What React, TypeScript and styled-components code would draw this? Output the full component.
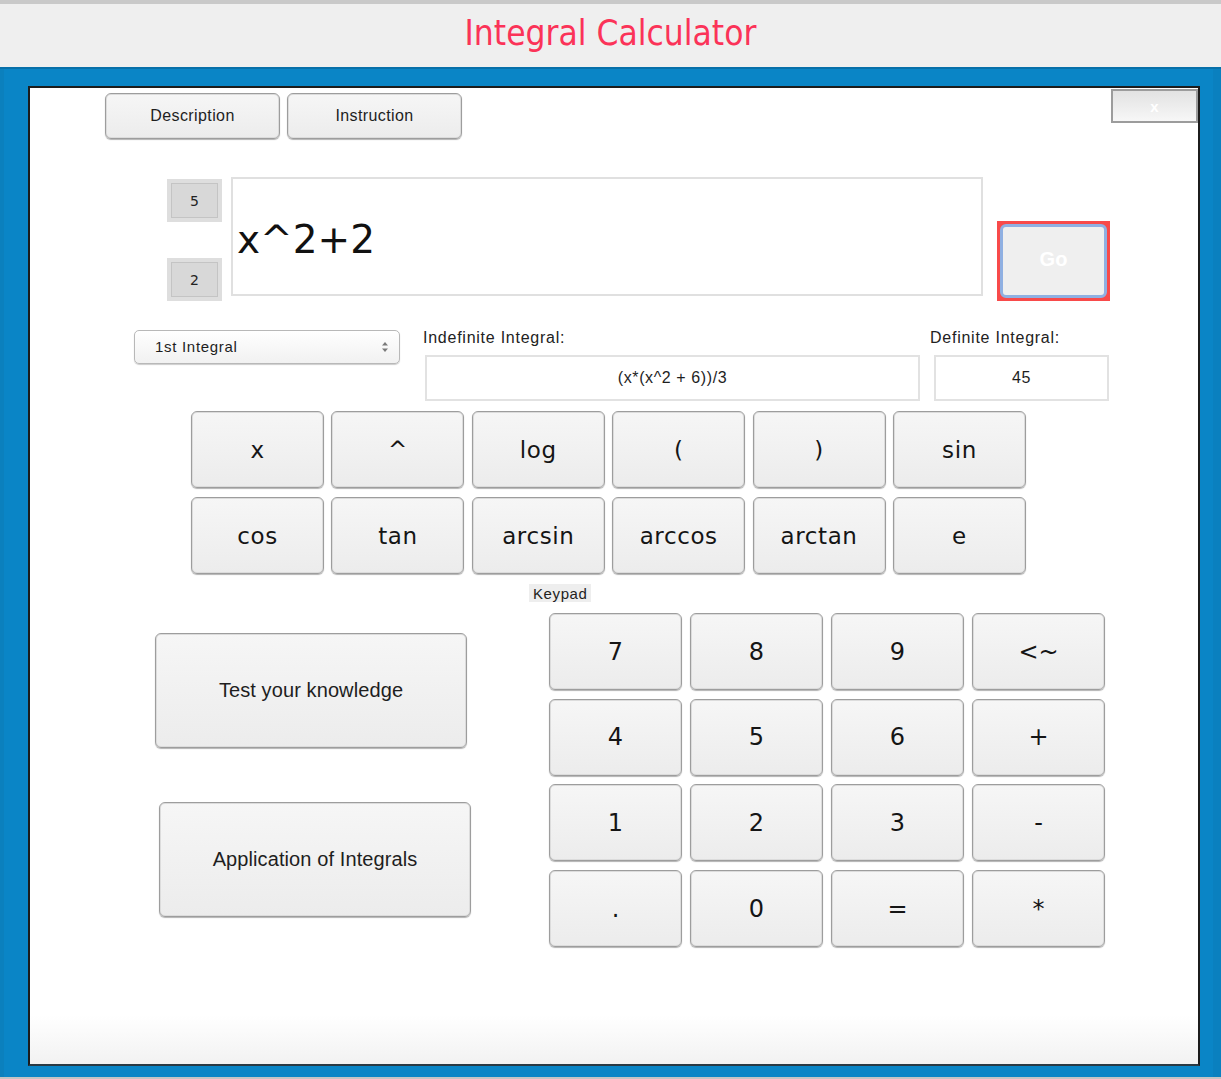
import styled, { createGlobalStyle } from "styled-components";

const GlobalStyle = createGlobalStyle`
  html, body {
    margin: 0;
    padding: 0;
    background: #c4c4c4;
  }
  body {
    font-family: "Liberation Sans", Arial, sans-serif;
    overflow: hidden;
  }
  button {
    font-family: inherit;
    cursor: pointer;
  }
`;

const FUNCTION_KEYS = ["x", "^", "log", "(", ")", "sin", "cos", "tan", "arcsin", "arccos", "arctan", "e"];
const KEYPAD_KEYS = ["7", "8", "9", "<~", "4", "5", "6", "+", "1", "2", "3", "-", ".", "0", "=", "*"];

export default function App() {
  return (
    <Page>
      <GlobalStyle />
      <TitleBar>
        <Title>Integral Calculator</Title>
      </TitleBar>

      <Frame>
        <Panel>
          <TopRow>
            <TabGroup>
              <TabButton type="button">Description</TabButton>
              <TabButton type="button">Instruction</TabButton>
            </TabGroup>
            <CloseButton type="button">x</CloseButton>
          </TopRow>

          <ExpressionRow>
            <Bounds>
              <BoundBox>
                <BoundInner>5</BoundInner>
              </BoundBox>
              <BoundBox>
                <BoundInner>2</BoundInner>
              </BoundBox>
            </Bounds>
            <ExpressionField>x^2+2</ExpressionField>
            <GoButton type="button">
              <GoFace>Go</GoFace>
            </GoButton>
          </ExpressionRow>

          <ResultRow>
            <Select>
              <span>1st Integral</span>
              <Arrows>
                <svg width="8" height="12" viewBox="0 0 8 12">
                  <path d="M4 1 L7 4.5 H1 Z" fill="#7a7a7a" />
                  <path d="M4 11 L7 7.5 H1 Z" fill="#7a7a7a" />
                </svg>
              </Arrows>
            </Select>

            <ResultGroup $gap={23}>
              <Label>Indefinite Integral:</Label>
              <ResultBox $width={495} $indent={2}>
                (x*(x^2 + 6))/3
              </ResultBox>
            </ResultGroup>

            <ResultGroup $gap={10}>
              <Label>Definite Integral:</Label>
              <ResultBox $width={175} $indent={4}>
                45
              </ResultBox>
            </ResultGroup>
          </ResultRow>

          <FunctionGrid>
            {FUNCTION_KEYS.map((k) => (
              <KeyButton key={k} type="button" $font="fn">
                {k}
              </KeyButton>
            ))}
          </FunctionGrid>

          <KeypadLabel>Keypad</KeypadLabel>

          <BottomRow>
            <SideColumn>
              <BigButton type="button">Test your knowledge</BigButton>
              <BigButton type="button" $shifted>
                Application of Integrals
              </BigButton>
            </SideColumn>

            <Keypad>
              {KEYPAD_KEYS.map((k) => (
                <KeyButton key={k} type="button" $font="num">
                  {k}
                </KeyButton>
              ))}
            </Keypad>
          </BottomRow>
        </Panel>
      </Frame>
    </Page>
  );
}

const Page = styled.div`
  width: 1221px;
  height: 1079px;
  display: flex;
  flex-direction: column;
`;

const TitleBar = styled.header`
  height: 63px;
  border-top: 4px solid #c9c9c9;
  background: #efefef;
  display: flex;
  justify-content: center;
  align-items: center;
`;

const Title = styled.h1`
  margin: 0 0 6px;
  font-family: "Liberation Sans Narrow", "DejaVu Sans Condensed", "Open Sans", sans-serif;
  font-stretch: condensed;
  font-weight: 400;
  font-size: 35px;
  color: #fb3358;
`;

const Frame = styled.main`
  height: 1010px;
  box-sizing: border-box;
  padding: 17px 21px 11px 28px;
  background: #0a85c6;
  border-top: 2px solid #0770a9;
  box-shadow: inset 4px 0 0 #0b80bd, inset -8px 0 0 #0a80bf;
  display: flex;
`;

const Panel = styled.section`
  flex: 1;
  border: 2px solid #1c1c1c;
  border-bottom-color: #2a3a44;
  background: linear-gradient(to bottom, #ffffff 0%, #ffffff 95%, #f2f2f2 100%);
  display: flex;
  flex-direction: column;
`;

const TopRow = styled.div`
  display: flex;
  align-items: flex-start;
  padding-left: 75px;
`;

const TabGroup = styled.div`
  display: flex;
  gap: 7px;
  margin-top: 5px;
`;

const buttonSkin = `
  border: 1px solid #9d9d9d;
  border-radius: 6px;
  background: linear-gradient(to bottom, #f6f6f6, #ececec);
  box-shadow: inset 0 0 0 1px #dcdcdc, 0 1px 1px rgba(0, 0, 0, 0.3);
  color: #1e1e1e;
  padding: 0;
`;

const TabButton = styled.button`
  ${buttonSkin}
  width: 175px;
  height: 46px;
  font-size: 16px;
  letter-spacing: 0.4px;
`;

const CloseButton = styled.button`
  margin-left: auto;
  margin-top: 1px;
  width: 87px;
  height: 34px;
  border: 2px solid #9c9c9c;
  background: linear-gradient(to bottom, #e2e2e2, #f7f7f7);
  color: #ffffff;
  font-weight: 700;
  font-size: 15px;
  padding: 0;
`;

const ExpressionRow = styled.div`
  display: flex;
  align-items: flex-start;
  margin-top: 38px;
  padding-left: 137px;
`;

const Bounds = styled.div`
  height: 122px;
  margin-top: 2px;
  display: flex;
  flex-direction: column;
  justify-content: space-between;
`;

const BoundBox = styled.div`
  width: 55px;
  height: 43px;
  box-sizing: border-box;
  padding: 4px 4px;
  background: #dedede;
`;

const BoundInner = styled.div`
  height: 100%;
  box-sizing: border-box;
  border: 1px solid #c4c4c4;
  background: #d8d8d8;
  display: flex;
  align-items: center;
  justify-content: center;
  font-family: "DejaVu Sans", sans-serif;
  font-size: 14px;
  color: #222;
`;

const ExpressionField = styled.div`
  width: 752px;
  height: 119px;
  box-sizing: border-box;
  margin-left: 9px;
  border: 2px solid #e0e0e0;
  background: #fff;
  display: flex;
  align-items: center;
  padding: 6px 0 0 4px;
  font-family: "DejaVu Sans", sans-serif;
  font-size: 39px;
  color: #111;
`;

const GoButton = styled.button`
  width: 113px;
  height: 80px;
  margin-left: 14px;
  margin-top: 44px;
  box-sizing: border-box;
  border: 3px solid #f84a4a;
  background: #f84a4a;
  padding: 0;
  display: flex;
`;

const GoFace = styled.span`
  flex: 1;
  border: 3px solid #8fb0e2;
  border-radius: 6px;
  background: #efefef;
  display: flex;
  align-items: center;
  justify-content: center;
  padding-bottom: 4px;
  color: #ffffff;
  font-weight: 700;
  font-size: 20px;
`;

const ResultRow = styled.div`
  display: flex;
  align-items: flex-start;
  margin-top: 29px;
  padding-left: 104px;
`;

const Select = styled.div`
  width: 266px;
  height: 34px;
  box-sizing: border-box;
  border: 1px solid #b8b8b8;
  border-radius: 5px;
  background: linear-gradient(to bottom, #ffffff, #f1f1f1);
  box-shadow: 0 1px 1px rgba(0, 0, 0, 0.2);
  display: flex;
  align-items: center;
  justify-content: space-between;
  padding: 0 10px 2px 20px;
  font-size: 15px;
  letter-spacing: 0.7px;
  color: #1e1e1e;
`;

const Arrows = styled.span`
  display: flex;
  align-items: center;
  padding-top: 2px;
`;

const ResultGroup = styled.div<{ $gap: number }>`
  margin-left: ${(p) => p.$gap}px;
  display: flex;
  flex-direction: column;
`;

const Label = styled.div`
  height: 17px;
  font-size: 16px;
  letter-spacing: 0.75px;
  color: #222;
  margin-top: -1px;
`;

const ResultBox = styled.div<{ $width: number; $indent: number }>`
  width: ${(p) => p.$width}px;
  height: 46px;
  box-sizing: border-box;
  margin-top: 9px;
  margin-left: ${(p) => p.$indent}px;
  border: 2px solid #e2e2e2;
  display: flex;
  align-items: center;
  justify-content: center;
  font-size: 16px;
  letter-spacing: 0.6px;
  color: #1e1e1e;
`;

const FunctionGrid = styled.div`
  display: grid;
  grid-template-columns: repeat(6, 133px);
  grid-auto-rows: 77px;
  column-gap: 7.4px;
  row-gap: 9px;
  margin-top: 10px;
  padding-left: 161px;
`;

const KeyButton = styled.button<{ $font: "fn" | "num" }>`
  ${buttonSkin}
  font-family: "DejaVu Sans", sans-serif;
  font-size: ${(p) => (p.$font === "fn" ? "23px" : "24px")};
  letter-spacing: ${(p) => (p.$font === "fn" ? "0.6px" : "0")};
  color: #151515;
`;

const KeypadLabel = styled.div`
  align-self: flex-start;
  margin-top: 10px;
  margin-left: 499px;
  padding: 1px 4px 0;
  height: 17px;
  background: #eeeeee;
  font-size: 15px;
  letter-spacing: 0.6px;
  color: #222;
`;

const BottomRow = styled.div`
  display: flex;
  align-items: flex-start;
  margin-top: 11px;
  padding-left: 125px;
`;

const SideColumn = styled.div`
  width: 316px;
  margin-top: 20px;
  display: flex;
  flex-direction: column;
`;

const BigButton = styled.button<{ $shifted?: boolean }>`
  ${buttonSkin}
  width: 312px;
  height: 115px;
  margin-top: ${(p) => (p.$shifted ? "54px" : "0")};
  margin-left: ${(p) => (p.$shifted ? "4px" : "0")};
  font-size: 20px;
  letter-spacing: 0.1px;
`;

const Keypad = styled.div`
  display: grid;
  grid-template-columns: repeat(4, 133px);
  grid-auto-rows: 77px;
  column-gap: 8px;
  row-gap: 8.7px;
  margin-left: 78px;
`;
